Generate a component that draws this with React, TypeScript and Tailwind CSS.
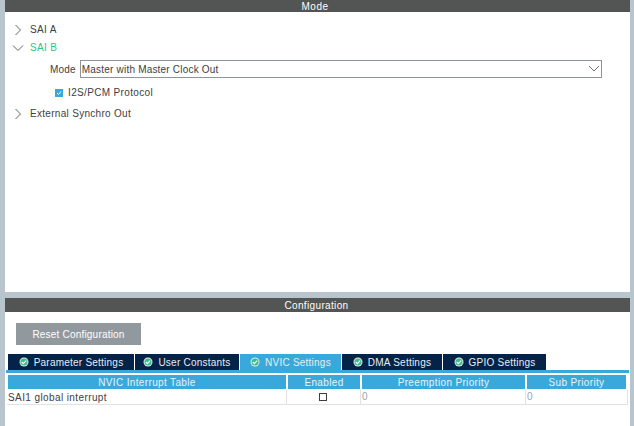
import type { ReactNode } from "react";

const tabs = [
  { label: "Parameter Settings", width: "w-[126px]", active: false },
  { label: "User Constants", width: "w-[104px]", active: false },
  { label: "NVIC Settings", width: "w-[101px]", active: true },
  { label: "DMA Settings", width: "w-[100px]", active: false },
  { label: "GPIO Settings", width: "w-[103px]", active: false },
];

function Chevron({ open }: { open?: boolean }) {
  return (
    <svg width="12" height="12" viewBox="0 0 12 12" fill="none" stroke="#5f6568" strokeWidth="1" className="shrink-0">
      {open ? <path d="M1 3.500l5 5 5-5" /> : <path d="M3.500 1l5 5-5 5" />}
    </svg>
  );
}

function TabCheck() {
  return (
    <svg width="10" height="10" viewBox="0 0 10 10" className="shrink-0">
      <circle cx="5" cy="5" r="4.500" fill="#d9efe6" />
      <circle cx="5" cy="5" r="3.500" fill="#3dbb8c" />
      <path d="M2.800 5l1.600 1.600 2.800-3" fill="none" stroke="#ffffff" strokeWidth="1.200" />
    </svg>
  );
}

function HeadCell({ className, children }: { className: string; children: ReactNode }) {
  return (
    <div className={`flex h-[14px] items-center justify-center bg-[#39a9dc] text-[10px] tracking-[0.35px] text-[#e6f4fb] ${className}`}>
      {children}
    </div>
  );
}

export default function App() {
  return (
    <div className="flex h-[426px] w-[634px] flex-col gap-[6px] overflow-hidden bg-[#b9c5cc] pl-[5px] pr-1 font-['Liberation_Sans',Arial,sans-serif] text-[#3c4043]">
      <section className="flex h-[292px] flex-col bg-white">
        <div className="flex h-3 items-center justify-center bg-[#525553] pr-[5px] text-[10px] tracking-[0.5px] text-white">
          Mode
        </div>
        <div className="flex items-center pt-[11px] pl-[7px] text-[10px] leading-[14px] tracking-[0.35px]">
          <Chevron />
          <span className="ml-[6px]">SAI A</span>
        </div>
        <div className="flex items-center pt-1 pl-[7px] text-[10px] leading-[14px] tracking-[0.35px]">
          <Chevron open />
          <span className="ml-[6px] text-[#3dbb8c]">SAI B</span>
        </div>
        <div className="mt-[5px] flex items-center pl-[45px] text-[10px] tracking-[0.2px]">
          <span>Mode</span>
          <div className="ml-[4px] flex h-[18px] w-[522px] items-center justify-between border border-[#8e9599] pr-[1px] pl-[1px]">
            <span>Master with Master Clock Out</span>
            <svg width="12" height="8" viewBox="0 0 12 8" fill="none" stroke="#6f7577" strokeWidth="1">
              <path d="M1 1l5 5 5-5" />
            </svg>
          </div>
        </div>
        <div className="mt-2 flex items-center pl-[50px] text-[10px] leading-[14px] tracking-[0.35px]">
          <span className="flex h-[8px] w-[8px] items-center justify-center bg-[#39a9dc]">
            <svg width="6" height="6" viewBox="0 0 6 6" fill="none" stroke="#ffffff" strokeWidth="1">
              <path d="M1 3l1.500 1.500L5 1.500" />
            </svg>
          </span>
          <span className="ml-[5px]">I2S/PCM Protocol</span>
        </div>
        <div className="mt-[7px] flex items-center pl-[7px] text-[10px] leading-[14px] tracking-[0.3px]">
          <Chevron />
          <span className="ml-[6px]">External Synchro Out</span>
        </div>
      </section>

      <section className="flex flex-1 flex-col bg-white">
        <div className="flex h-[14px] items-center justify-center bg-[#525553] pr-[2px] text-[10px] tracking-[0.35px] text-white">
          Configuration
        </div>
        <div className="mt-[11px] ml-[11px] flex h-[22px] w-[125px] items-center justify-center bg-[#92999e] text-[10px] tracking-[0.2px] text-white">
          Reset Configuration
        </div>
        <div className="mt-[9px] ml-[3px] flex h-4 gap-[1px]">
          {tabs.map((tab) => (
            <div
              key={tab.label}
              className={`flex items-center justify-center gap-[5px] text-[10px] tracking-[0.23px] text-[#e8eef2] ${tab.width} ${
                tab.active ? "bg-[#39a9dc]" : "bg-[#03234b]"
              }`}
            >
              <TabCheck />
              {tab.label}
            </div>
          ))}
        </div>
        <div className="ml-[1px] mr-[1px] h-[3px] bg-[#39a9dc]" />
        <div className="mt-[2px] ml-[3px] flex gap-[1px]">
          <HeadCell className="w-[278px]">NVIC Interrupt Table</HeadCell>
          <HeadCell className="ml-[1px] w-[72px]">Enabled</HeadCell>
          <HeadCell className="ml-[1px] w-[163px]">Preemption Priority</HeadCell>
          <HeadCell className="ml-[1px] w-[99px]">Sub Priority</HeadCell>
        </div>
        <div className="ml-[2px] mt-[1px] flex h-[15px] w-[621px] items-center border-b border-[#e0e2e3] text-[10px] tracking-[0.4px]">
          <span className="w-[279px] pl-[1px]">SAI1 global interrupt</span>
          <div className="flex h-full w-[75px] items-center justify-center border-x border-[#e0e2e3] pr-[2px]">
            <span className="h-2 w-2 border border-[#3c4043]" />
          </div>
          <span className="h-full w-[165px] border-r border-[#e0e2e3] pl-[1px] leading-[14px] text-[#9aa3ad]">0</span>
          <span className="h-full flex-1 border-r border-[#e0e2e3] pl-[1px] leading-[14px] text-[#9aa3ad]">0</span>
        </div>
      </section>
    </div>
  );
}
